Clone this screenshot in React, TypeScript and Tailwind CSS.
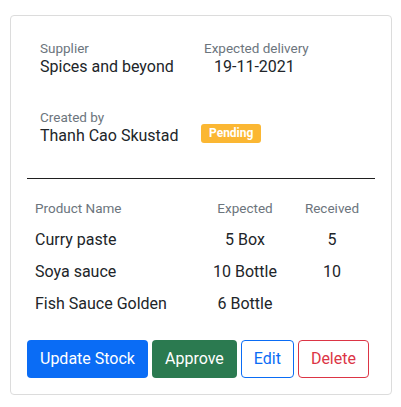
const rows = [
  { name: 'Curry paste', expected: '5 Box', received: '5' },
  { name: 'Soya sauce', expected: '10 Bottle', received: '10' },
  { name: 'Fish Sauce Golden', expected: '6 Bottle', received: '' },
]

const Field = ({ label, value, className }: { label: string; value: React.ReactNode; className?: string }) => (
  <div className={className}>
    <p className="text-[13.5px] leading-[18px] text-[#6c757d]">{label}</p>
    <div className="text-[16px] leading-[20px] text-[#212529]">{value}</div>
  </div>
)

export default function App() {
  return (
    <div className="bg-white pt-[15px] pl-[10px] font-['Roboto',sans-serif]" style={{ minHeight: 407 }}>
      <div className="w-[382px] rounded-[4px] border border-[#dcdcdc] px-4 pt-[23px] pb-[16px]">
        <div className="grid grid-cols-[164px_1fr] gap-y-[31px] pl-[13px]">
          <Field label="Supplier" value="Spices and beyond" />
          <Field label="Expected delivery" value={<span className="pl-[10px]">19-11-2021</span>} />
          <Field label="Created by" value="Thanh Cao Skustad" />
          <div className="pt-[12px]">
            <span className="-ml-[3px] inline-flex h-[19px] items-center rounded-[3px] bg-[#fbb733] px-[8px] text-[12px] font-bold text-white">
              Pending
            </span>
          </div>
        </div>

        <div className="mt-[32px] h-px bg-[#1f1f1f]" />

        <div className="mt-[14px] pl-2">
          <div className="grid h-[31px] grid-cols-[170px_80px_94px] items-center text-[13.5px] text-[#6c757d]">
            <span>Product Name</span>
            <span className="text-center">Expected</span>
            <span className="text-center">Received</span>
          </div>
          {rows.map(r => (
            <div key={r.name} className="grid h-8 grid-cols-[170px_80px_94px] items-center text-[16px] text-[#212529]">
              <span>{r.name}</span>
              <span className="text-center">{r.expected}</span>
              <span className="text-center">{r.received}</span>
            </div>
          ))}
        </div>

        <div className="mt-[20px] flex gap-1">
          <button className="h-[38px] rounded-[4px] bg-[#0a6cf5] px-[13px] text-[16px] text-white">Update Stock</button>
          <button className="h-[38px] rounded-[4px] bg-[#2b7a50] px-[13px] text-[16px] text-white">Approve</button>
          <button className="h-[38px] rounded-[4px] border border-[#0a6cf5] px-[12px] text-[16px] text-[#0a6cf5]">Edit</button>
          <button className="h-[38px] rounded-[4px] border border-[#dc3545] px-[12px] text-[16px] text-[#dc3545]">Delete</button>
        </div>
      </div>
    </div>
  )
}
